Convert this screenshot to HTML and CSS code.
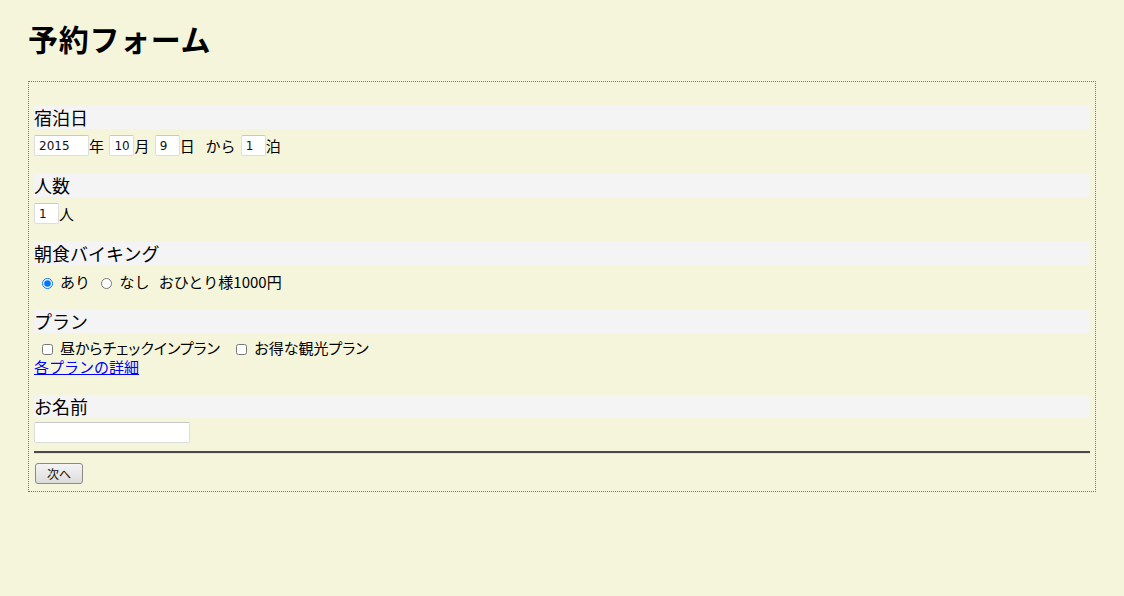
FILE: index.html
```html
<!DOCTYPE html>
<html lang="ja">
<head>
  <meta charset="utf-8">
  <title>予約フォーム</title>
  <link rel="stylesheet" href="styles.css">
</head>
<body>
  <h1>予約フォーム</h1>

  <form class="reserve">
    <fieldset>
      <div class="section">
        <h3>宿泊日</h3>
        <div class="row date">
          <input type="text" class="num year" value="2015">年 <input type="text" class="num" value="10">月 <input type="text" class="num" value="9">日&nbsp; から <input type="text" class="num" value="1">泊
        </div>
      </div>

      <div class="section">
        <h3>人数</h3>
        <div class="row">
          <input type="text" class="num" value="1">人
        </div>
      </div>

      <div class="section">
        <h3>朝食バイキング</h3>
        <div class="row">
          <label><input type="radio" name="breakfast" checked>あり</label>
          <label><input type="radio" name="breakfast">なし</label>
          <span class="note">おひとり様1000円</span>
        </div>
      </div>

      <div class="section">
        <h3>プラン</h3>
        <div class="row checks">
          <label><input type="checkbox">昼からチェックインプラン</label>
          <label><input type="checkbox">お得な観光プラン</label>
        </div>
        <div class="row">
          <a href="#">各プランの詳細</a>
        </div>
      </div>

      <div class="section last">
        <h3>お名前</h3>
        <div class="row">
          <input type="text" class="name">
        </div>
      </div>

      <hr>
      <button type="button">次へ</button>
    </fieldset>
  </form>
</body>
</html>
```

FILE: styles.css
```css
body {
  margin: 0;
  padding: 0 28px;
  background: #f5f5dc;
  color: #000;
  font-family: "Noto Sans CJK JP", "DejaVu Sans", sans-serif;
  font-size: 15px;
}

h1 {
  margin: 0;
  padding-top: 16px;
  height: 81px;
  box-sizing: border-box;
  font-size: 30px;
  line-height: 44px;
  font-weight: bold;
  letter-spacing: 0.7px;
}

fieldset {
  margin: 0;
  padding: 24px 5px 7px 5px;
  border: 1px dotted #777;
  min-width: 0;
}

.section {
  margin-bottom: 18px;
}

.section.last {
  margin-bottom: 0;
}

h3 {
  margin: 0 0 6px 0;
  height: 23px;
  line-height: 23px;
  font-size: 18px;
  font-weight: normal;
  background: #f4f4f4;
}

.section.last h3 {
  margin-bottom: 4px;
}

.row {
  height: 21px;
  line-height: 21px;
  white-space: nowrap;
}

.row.date {
  word-spacing: 2px;
}

.row.checks {
  height: 17px;
  line-height: 17px;
  font-feature-settings: "palt";
}

.row.checks label + label {
  margin-left: 5px;
}

.note {
  margin-left: 6px;
}

input[type="text"] {
  box-sizing: border-box;
  height: 21px;
  margin: 0;
  padding: 0 4px;
  border: 1px solid #ddd;
  border-top-color: #c8c8c8;
  border-radius: 2px;
  background: #fff;
  font-family: "DejaVu Sans", sans-serif;
  font-size: 12px;
  color: #111;
  vertical-align: top;
}

input.num {
  width: 25px;
}

input.year {
  width: 55px;
}

input.name {
  width: 156px;
}

input[type="radio"],
input[type="checkbox"] {
  width: 11px;
  height: 11px;
  margin: 0 7px 0 8px;
  vertical-align: -1px;
}

a {
  color: #00f;
  text-decoration: underline;
}

hr {
  margin: 8px 0 9px 0;
  height: 0;
  border: 0;
  border-top: 2px solid #4a4a4a;
  border-bottom: 1px solid #e4e4d8;
}

button {
  display: block;
  margin-left: 1px;
  width: 48px;
  height: 21px;
  padding: 0;
  border: 1px solid #8a8a8a;
  border-radius: 3px;
  background: linear-gradient(#f4f4f4, #dcdcdc);
  font-family: "Noto Sans CJK JP", sans-serif;
  font-size: 12px;
  color: #111;
}
```
